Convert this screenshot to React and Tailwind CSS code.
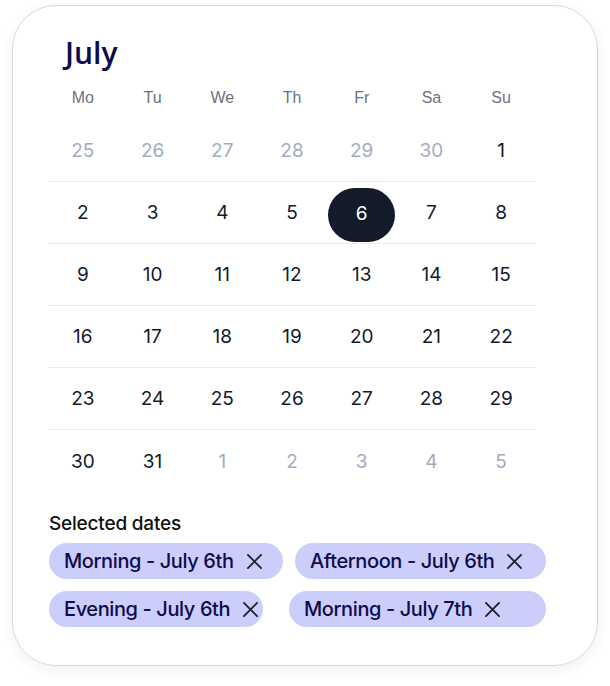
import React from "react";

const weekdays = ["Mo", "Tu", "We", "Th", "Fr", "Sa", "Su"];

const weeks = [
  [[25, true], [26, true], [27, true], [28, true], [29, true], [30, true], [1]],
  [[2], [3], [4], [5], [6], [7], [8]],
  [[9], [10], [11], [12], [13], [14], [15]],
  [[16], [17], [18], [19], [20], [21], [22]],
  [[23], [24], [25], [26], [27], [28], [29]],
  [[30], [31], [1, true], [2, true], [3, true], [4, true], [5, true]],
];

const chips = [
  ["Morning - July 6th", "w-[234px]", "Afternoon - July 6th", "w-[251px]"],
  ["Evening - July 6th", "w-[214px]", "Morning - July 7th", "w-[257px]"],
];

function Chip({ label, width }) {
  return (
    <div className={`${width} h-[36px] rounded-full bg-[#cbcdfb] flex items-center pl-[15px] gap-[10px] whitespace-nowrap`}>
      <span className="text-[20px] font-medium text-[#0e0c4a] tracking-[-0.4px]">{label}</span>
      <svg className="shrink-0" width="21" height="21" viewBox="0 0 24 24" fill="none" stroke="#1f2430" strokeWidth="2.2" strokeLinecap="round">
        <path d="M4.5 4.5L19.5 19.5M19.5 4.5L4.5 19.5" />
      </svg>
    </div>
  );
}

export default function App() {
  return (
    <div className="pt-[5px] pl-[12px] bg-white min-h-[686px]" style={{ fontFamily: "Inter, 'Noto Sans', sans-serif" }}>
      <div className="w-[586px] h-[661px] rounded-[44px] border border-[#d5d9e1] shadow-[0_4px_14px_rgba(15,23,42,0.06)] pl-[35px] pt-[30px]">
        <div className="ml-[17px] text-[30px] leading-[34px] font-semibold text-[#0c0a4d]" style={{ fontFamily: "'Open Sans', sans-serif" }}>
          July
        </div>
        <div className="mt-[15px] w-[488px] grid grid-cols-7 h-[26px] items-center">
          {weekdays.map((d) => (
            <div key={d} className="text-center text-[16px] text-[#6b7280]" style={{ fontFamily: "'Liberation Sans', Arial, sans-serif" }}>
              {d}
            </div>
          ))}
        </div>
        <div className="mt-[9px] w-[488px]">
          {weeks.map((week, wi) => (
            <div key={wi} className={`grid grid-cols-7 h-[62px] ${wi < weeks.length - 1 ? "border-b border-[#e8eaef]" : ""}`}>
              {week.map(([n, muted], di) => {
                const selected = wi === 1 && n === 6;
                return (
                  <div key={di} className="flex items-center justify-center pt-[2px]">
                    {selected ? (
                      <div className="w-[67px] h-[54px] mt-[2px] rounded-full bg-[#131a2a] flex items-center justify-center text-[19px] text-white">
                        {n}
                      </div>
                    ) : (
                      <span className={`text-[19px] ${muted ? "text-[#a3abbf]" : "text-[#131a2a]"}`}>{n}</span>
                    )}
                  </div>
                );
              })}
            </div>
          ))}
        </div>
        <div className="mt-[20px] ml-[1px] text-[19px] leading-[24px] font-medium text-[#111111] tracking-[-0.2px]">Selected dates</div>
        <div className="mt-[7px] ml-[1px] w-[497px] flex flex-col gap-[12px]">
          {chips.map(([a, wa, b, wb], i) => (
            <div key={i} className="flex justify-between">
              <Chip label={a} width={wa} />
              <Chip label={b} width={wb} />
            </div>
          ))}
        </div>
      </div>
    </div>
  );
}
